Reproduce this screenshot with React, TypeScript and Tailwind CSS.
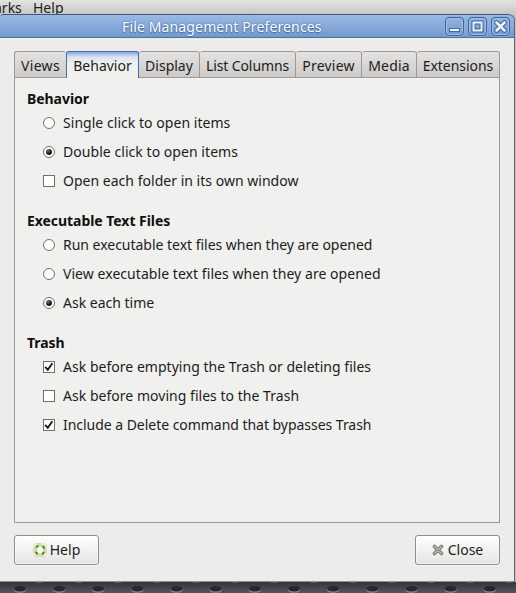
import React from "react";

type Kind = "radio" | "check";
type Option = { label: string; kind: Kind; on: boolean; tracking: string };

const sections: { title: string; options: Option[] }[] = [
  {
    title: "Behavior",
    options: [
      { label: "Single click to open items", kind: "radio", on: false, tracking: "tracking-[0.04px]" },
      { label: "Double click to open items", kind: "radio", on: true, tracking: "tracking-[0.05px]" },
      { label: "Open each folder in its own window", kind: "check", on: false, tracking: "tracking-[0.02px]" },
    ],
  },
  {
    title: "Executable Text Files",
    options: [
      { label: "Run executable text files when they are opened", kind: "radio", on: false, tracking: "tracking-[-0.02px]" },
      { label: "View executable text files when they are opened", kind: "radio", on: false, tracking: "tracking-[0.055px]" },
      { label: "Ask each time", kind: "radio", on: true, tracking: "tracking-[0px]" },
    ],
  },
  {
    title: "Trash",
    options: [
      { label: "Ask before emptying the Trash or deleting files", kind: "check", on: true, tracking: "tracking-[0.03px]" },
      { label: "Ask before moving files to the Trash", kind: "check", on: false, tracking: "tracking-[0.03px]" },
      { label: "Include a Delete command that bypasses Trash", kind: "check", on: true, tracking: "tracking-[-0.035px]" },
    ],
  },
];

const tabs = [
  { label: "Views", width: "w-[52px]", tracking: "tracking-[0.3px]" },
  { label: "Behavior", width: "w-[73px]", tracking: "tracking-[0px]" },
  { label: "Display", width: "w-[61px]", tracking: "tracking-[0px]" },
  { label: "List Columns", width: "w-[96px]", tracking: "tracking-[-0.1px]" },
  { label: "Preview", width: "w-[66px]", tracking: "tracking-[0.25px]" },
  { label: "Media", width: "w-[55px]", tracking: "tracking-[0.2px]" },
  { label: "Extensions", width: "w-[83px]", tracking: "tracking-[-0.05px]" },
];

function Mark({ kind, on }: { kind: Kind; on: boolean }) {
  if (kind === "radio") {
    return (
      <span className="flex size-3 shrink-0 items-center justify-center rounded-full border border-[#70706e] bg-white">
        {on && <span className="size-1.5 rounded-full bg-[radial-gradient(circle_at_35%_30%,#777,#151515_55%)]" />}
      </span>
    );
  }
  return (
    <span className="flex size-3 shrink-0 items-center justify-center border border-[#70706e] bg-white">
      {on && (
        <svg width="10" height="10" viewBox="0 0 10 10" fill="none" stroke="#181818" strokeWidth="1.9">
          <path d="M1.2 4.8 L3.8 7.8 L8.4 1.3" />
        </svg>
      )}
    </span>
  );
}

function TitleButton({ children }: { children: React.ReactNode }) {
  return (
    <span className="flex h-[19px] w-[19px] items-center justify-center rounded-[4px] border border-[#3e639a] bg-linear-to-b from-[#94b4df] to-[#7199cd] shadow-[inset_0_0_0_1px_#a2bfe5,0_0_0_1px_#8eafdc]">
      <svg width="17" height="17" viewBox="0 0 17 17" fill="none">{children}</svg>
    </span>
  );
}

function HelpIcon() {
  return (
    <svg width="14" height="14" viewBox="0 0 14 14" fill="none">
      <rect x="0.5" y="0.5" width="13" height="13" rx="3" stroke="#e4d3b8" strokeDasharray="5 2" />
      <circle cx="7" cy="7" r="4.8" stroke="#c9e3a6" strokeWidth="3.4" />
      <circle cx="7" cy="7" r="4.6" stroke="#528b25" strokeWidth="2" strokeDasharray="3 4.225" strokeDashoffset="-2.1" />
      <circle cx="7" cy="7" r="2.9" fill="#fafaf8" />
    </svg>
  );
}

function CloseIcon() {
  return (
    <svg width="12" height="12" viewBox="0 0 12 12" fill="none" strokeLinecap="round">
      <path d="M2.5 2.5 L9.5 9.5 M9.5 2.5 L2.5 9.5" stroke="#7b7c79" strokeWidth="3.6" />
      <path d="M2.5 2.5 L9.5 9.5 M9.5 2.5 L2.5 9.5" stroke="#b5b6b3" strokeWidth="1.6" />
    </svg>
  );
}

const buttonStyle =
  "flex h-[30px] w-[85px] items-center justify-center rounded-[3px] border border-[#8f8f8d] bg-linear-to-b from-white to-[#e5e4e2] shadow-[inset_0_0_0_1px_rgba(255,255,255,0.5),0_1px_0_#f8f8f7]";

export default function App() {
  return (
    <div className="flex h-[593px] w-[516px] flex-col overflow-hidden bg-[#43464e] font-['Noto_Sans','Open_Sans',sans-serif] text-[14px] leading-[20px] text-[#1c1c1c]">
      <div className="flex h-[14px] shrink-0 items-start overflow-hidden bg-linear-to-b from-[#e4e3e1] to-[#c9c8c6] leading-[16px] whitespace-nowrap">
        <span className="w-[33px] shrink-0"><span className="ml-[-6px]">arks</span></span>
        <span>Help</span>
      </div>

      <div className="flex h-[568px] shrink-0 bg-[#c6c5c3]">
        <main className="flex w-[515px] flex-col rounded-tr-[6px] border-r border-b border-r-[#61625f] border-b-[#8c908b] bg-[#edecea]">
          <header className="flex h-6 shrink-0 items-center rounded-tl-[3px] rounded-tr-[6px] border-t border-b border-t-[#3b557d] border-b-[#4672ad] bg-linear-to-b from-[#9abae5] to-[#739acd]">
            <h1 className="flex-1 pt-[2px] pl-[122px] whitespace-nowrap text-white [text-shadow:0_0_2px_#39639d,0_1px_1px_#4b74aa]">
              <span className="tracking-[0.14px]">File Management Preferences</span>
            </h1>
            <div className="flex gap-1 pr-[4px]">
              <TitleButton>
                <rect x="3.5" y="10.5" width="10" height="3" fill="#eef5ff" stroke="#416aa4" />
              </TitleButton>
              <TitleButton>
                <rect x="4.5" y="4.5" width="8" height="8" stroke="#3e659e" strokeWidth="4" />
                <rect x="4.5" y="4.5" width="8" height="8" stroke="#eef5ff" strokeWidth="2" />
              </TitleButton>
              <TitleButton>
                <path d="M4.5 4.5 L12.5 12.5 M12.5 4.5 L4.5 12.5" stroke="#3e659e" strokeWidth="4.6" strokeLinecap="round" />
                <path d="M4.5 4.5 L12.5 12.5 M12.5 4.5 L4.5 12.5" stroke="#eef5ff" strokeWidth="2.6" strokeLinecap="round" />
              </TitleButton>
            </div>
          </header>

          <div className="mt-[13px] ml-[14px] flex h-[27px] w-[486px] shrink-0">
            {tabs.map((tab, i) => (
              <div
                key={tab.label}
                className={`${tab.width} flex shrink-0 justify-center rounded-t-[3px] pt-[4px] whitespace-nowrap ${
                  i === 1
                    ? "border-x border-t border-[#456da5] bg-linear-to-b from-[#86a9da] via-[#dbe5f2] via-20% to-[#f0f0ee] to-45%"
                    : `border-t border-b border-[#9b9a98] bg-linear-to-b from-[#e4e3e1] to-[#cccbc9] ${i === 0 ? "border-l" : "border-r"}`
                }`}
              >
                <span className={tab.tracking}>{tab.label}</span>
              </div>
            ))}
          </div>

          <section className="ml-[14px] flex h-[445px] w-[486px] shrink-0 flex-col gap-[15px] border-x border-b border-[#9b9a98] bg-[#f0f0ee] pt-[11px] pl-[12px]">
            {sections.map((section) => (
              <div key={section.title} className="flex h-[107px] shrink-0 flex-col">
                <h2 className="h-5 font-bold tracking-[-0.05px] text-[#101010]">{section.title}</h2>
                <div className="mt-[4px] flex flex-col gap-[9px] pl-4">
                  {section.options.map((option) => (
                    <div key={option.label} className="flex h-5 items-center gap-2 whitespace-nowrap">
                      <Mark kind={option.kind} on={option.on} />
                      <span className={option.tracking}>{option.label}</span>
                    </div>
                  ))}
                </div>
              </div>
            ))}
          </section>

          <footer className="mt-[12px] ml-[14px] flex w-[486px] justify-between">
            <button className={buttonStyle}>
              <HelpIcon />
              <span className="ml-[3px]">Help</span>
            </button>
            <button className={buttonStyle}>
              <CloseIcon />
              <span className="ml-[4px]">Close</span>
            </button>
          </footer>
        </main>
      </div>

      <svg className="shrink-0" width="516" height="11" viewBox="0 0 516 11">
        <defs>
          <linearGradient id="mesh" x1="0" y1="0" x2="0" y2="1">
            <stop offset="0" stopColor="#32343a" />
            <stop offset="1" stopColor="#53565f" />
          </linearGradient>
        </defs>
        <rect width="516" height="11" fill="url(#mesh)" />
        {Array.from({ length: 14 }, (_, i) => (
          <g key={i}>
            <ellipse cx={20 + i * 39.15} cy="7.8" rx="6.2" ry="3" fill="#85878d" />
            <ellipse cx={20 + i * 39.15} cy="6.8" rx="6" ry="2.8" fill="#27282c" />
            <ellipse cx={39.5 + i * 39.15} cy="0" rx="4" ry="1" fill="#595b60" />
          </g>
        ))}
      </svg>
    </div>
  );
}
